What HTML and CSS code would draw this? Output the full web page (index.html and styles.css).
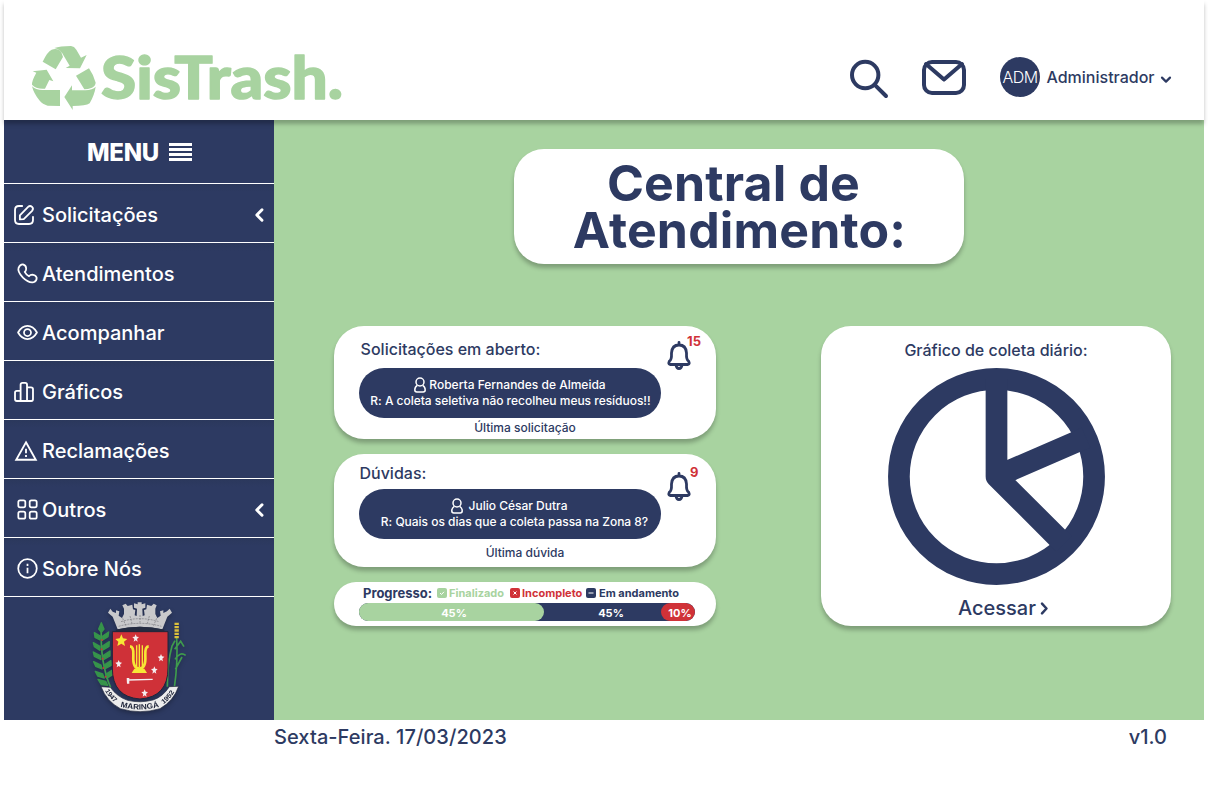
FILE: index.html
```html
<!DOCTYPE html>
<html lang="pt-BR">
<head>
<meta charset="utf-8">
<title>SisTrash</title>
<link rel="stylesheet" href="styles.css">
</head>
<body>
<div class="app">
  <header class="topbar">
    <div class="logo">
      <svg class="logo-mark" width="66" height="66" viewBox="35 27 198 198">
        <path d="M70 77Q84 47 97 41Q117 35 126 49L131 63L109 100Z"/>
        <path d="M105 36Q122 30 155 30Q165 31 171 41L185 65L202 57L182 97L139 96L151 89L134 61Q125 40 105 36Z"/>
        <path d="M170 119L209 97Q224 119 229 140Q228 150 218 155Q205 160 195 160Z"/>
        <path d="M135 183L158 148V163H198Q220 162 229 152Q226 175 211 202Q200 210 160 210V222Z"/>
        <path d="M38 151Q48 162 70 162H122V210L85 209Q70 206 60 193Q43 172 38 151Z"/>
        <path d="M40 106L82 101L102 136L90 132L77 158Q50 160 38 146Q37 135 51 110Z"/>
      </svg>
      <svg class="logo-name" width="246" height="60" viewBox="0 0 246 60">
        <text x="1" y="47.500" textLength="242" lengthAdjust="spacingAndGlyphs">SisTrash.</text>
      </svg>
    </div>
    <div class="tools">
      <svg class="search" width="40" height="40" viewBox="0 0 40 40"><circle cx="16.2" cy="16" r="13.2"/><path d="M25.8 25.8L37 37"/></svg>
      <svg class="mail" width="44" height="35" viewBox="0 0 44 35"><rect x="2" y="2" width="40" height="31" rx="8"/><path d="M4 4L22 19.5L40 4"/></svg>
      <div class="avatar">ADM</div>
      <div class="user">Administrador</div>
      <svg class="caret" width="12" height="8" viewBox="0 0 12 8"><path d="M2 1.6L6 5.6L10 1.6"/></svg>
    </div>
  </header>

  <div class="body">
    <nav class="sidebar">
      <div class="menu-head"><span>MENU</span><i class="burger"></i></div>
      <a class="item"><svg class="ico" viewBox="0 0 24 24"><path d="M10 2.200H6.500Q2.200 2.200 2.200 6.500V17.500Q2.200 21.800 6.500 21.800H17.500Q21.800 21.800 21.800 17.500V14"/><path d="M7.500 16.800V12.300L16.500 3.200Q18.600 1.200 20.800 3.200Q22.800 5.300 20.800 7.500L11.700 16.500Z"/></svg><span>Solicitações</span><svg class="back" viewBox="0 0 10 14"><path d="M8 1.800L2.800 7L8 12.200"/></svg></a>
      <a class="item in"><svg class="ico" viewBox="0 0 24 24"><path d="M1.800 5.500Q3.500 1.300 6.800 1.500Q10.500 2.500 10.500 6.500Q10.500 9 8.800 10.200Q10.500 13.500 13.700 15.200Q15.200 13.300 17.500 13.300Q21.500 13.800 22.500 16.800Q22.700 20.500 19 22Q13.500 23.300 6.800 16.800Q.3 10 1.800 5.500Z"/></svg><span>Atendimentos</span></a>
      <a class="item in"><svg class="ico" viewBox="0 0 24 24"><path d="M1.200 12Q5.500 4.500 12 4.500T22.800 12Q18.500 19.500 12 19.500T1.200 12Z"/><circle cx="12" cy="12" r="4"/></svg><span>Acompanhar</span></a>
      <a class="item"><svg class="ico" viewBox="0 0 24 24"><path d="M8.300 21.800H4.200Q2.200 21.800 2.200 20V12.600Q2.200 10.800 4.200 10.800H8.300M8.300 21.800V4Q8.300 2 10.300 2H13.300Q15.300 2 15.300 4V21.800ZM15.300 7H19.600Q21.800 7 21.800 9V20Q21.800 21.800 20 21.800H15.300"/></svg><span>Gráficos</span></a>
      <a class="item tri"><svg class="ico" viewBox="0 0 24 24"><path d="M12 2.500L22.700 21.500H1.300Z" stroke-linejoin="miter"/><path d="M12 9.500V14.500M12 16.300V18.500" stroke-linecap="butt"/></svg><span>Reclamações</span></a>
      <a class="item in"><svg class="ico" viewBox="0 0 24 24"><rect x="1.500" y="1.500" width="8" height="8" rx="2"/><rect x="14.500" y="1.500" width="8" height="8" rx="2"/><rect x="1.500" y="14.500" width="8" height="8" rx="2"/><rect x="14.500" y="14.500" width="8" height="8" rx="2"/></svg><span>Outros</span><svg class="back" viewBox="0 0 10 14"><path d="M8 1.800L2.800 7L8 12.200"/></svg></a>
      <a class="item in"><svg class="ico" viewBox="0 0 24 24"><circle cx="12" cy="12" r="10.600"/><path d="M12 11V17.500M12 6.500V9" stroke-linecap="butt"/></svg><span>Sobre Nós</span></a>
      <svg class="crest" width="120" height="123" viewBox="0 3 360 369">
        <g fill="none" stroke="#3f9b4d" stroke-width="5"><path d="M64 98Q60 200 92 275"/><path d="M283 275Q294 200 290 125M262 272Q262 200 276 150L285 134M284 160L302 136L312 152M285 190Q300 165 317 178M265 200L262 185M286 220L306 183"/></g>
        <g fill="#36944a" stroke="#36944a" stroke-width="4" stroke-linejoin="round">
          <path d="M64 80L72 99L64 109L56 99ZM43 110L62 121L60 132L45 124ZM86 108L67 121L66 133L84 122ZM40 140L60 151L60 163L43 152ZM88 137L67 150L67 163L87 151ZM40 168L61 179L63 191L43 181ZM90 165L69 179L69 192L90 180ZM41 197L63 207L66 219L47 211ZM93 194L72 207L74 219L94 208ZM46 226L68 234L73 246L53 240ZM97 222L77 235L80 247L98 236ZM54 250L77 256L83 268L64 266Z"/>
        </g>
        <g fill="#c5393a"><circle cx="66" cy="132" r="3"/><circle cx="65" cy="160" r="3"/><circle cx="68" cy="188" r="3"/><circle cx="70" cy="216" r="3"/><circle cx="77" cy="242" r="3"/></g>
        <path d="M290 80V128" stroke="#d9bf3c" stroke-width="13" stroke-dasharray="7 3" fill="none"/>
        <path d="M84 50L91 38L98 47L108 51V43L118 46L116 59L126 66L132 54V38L127 28L137 23L143 30L157 26L159 40L166 42L164 58L170 60L171 38L162 35V22L173 25V19H185V25L196 22V35L187 38L188 60L194 58L192 42L199 40L201 26L214 30L221 23L230 28L226 38V54L232 66L242 59L240 46L250 43V51L261 46L269 38L276 50L262 62L247 100Q180 84 113 100L98 62Z" fill="#c9c9cb"/>
        <path d="M123 77Q180 59 237 77M116 91Q180 73 244 91M128 67L138 90M150 60L156 83M208 60L202 83M230 67L220 90M180 57V80" fill="none" stroke="#77777d" stroke-width="2" stroke-dasharray="6 3"/>
        <path d="M106 101Q180 83 254 101L250 110Q180 101 111 109Z" fill="#242b40"/>
        <path d="M97 107H264V216Q264 303 180 309Q97 303 97 216Z" fill="#cf3138" stroke="#20263b" stroke-width="3"/>
        <path d="M124 115L129 127L142 129L132 137L135 150L124 143L112 150L115 137L106 129L119 127Z" fill="#f7e735"/>
        <g fill="#f5eef0"><path id="star" d="M167 115L170 122L177 123L171 129L173 137L167 133L161 137L163 129L157 123L164 122Z"/><use href="#star" x="76" y="59"/><use href="#star" x="-51" y="77"/><use href="#star" x="56" y="96"/><use href="#star" x="27" y="165"/></g>
        <g fill="none" stroke="#f7e735" stroke-width="5"><path d="M150 151Q162 152 160 180Q158 217 178 218Q198 217 196 180Q194 152 206 151" stroke-width="8"/><path d="M170 148V211M178 145V214M187 148V211" stroke-width="4"/></g><path d="M163 218H193L201 231H155Z" fill="#f7e735"/>
        <path d="M144 252L218 250" stroke="#f5eef0" stroke-width="4"/><path d="M140 246H148V263H141Z" fill="#f5eef0"/>
        <path d="M63 272L91 274Q112 303 143 313Q180 322 219 312Q248 303 268 272L296 271Q281 315 240 338Q180 356 121 338Q80 316 63 272Z" fill="#ededed" stroke="#20263b" stroke-width="2"/>
        <path id="left" d="M75 284Q90 312 118 329" fill="none"/><path id="mid" d="M121 332Q180 349 242 331" fill="none"/><path id="right" d="M250 325Q276 306 287 280" fill="none"/>
        <g class="crest-text"><text><textPath href="#left" textLength="46" lengthAdjust="spacingAndGlyphs">1947</textPath></text><text class="crest-city"><textPath href="#mid" textLength="118" lengthAdjust="spacingAndGlyphs">MARINGÁ</textPath></text><text><textPath href="#right" textLength="50" lengthAdjust="spacingAndGlyphs">1952</textPath></text></g>
      </svg>
    </nav>

    <main class="content">
      <h1 class="title"><span class="line first">Central de</span><span class="line">Atendimento:</span></h1>
      <div class="row">
        <div class="stack">
          <section class="card ticket">
            <div class="label">Solicitações em aberto:</div>
            <div class="pill"><div class="who"><svg class="person" viewBox="0 0 12 16"><circle cx="6" cy="5" r="4"/><path d="M3.300 8.300Q.7 10 .8 13Q.8 14.900 2.800 14.900H9.200Q11.200 14.900 11.200 13Q11.300 10 8.700 8.300"/></svg><span>Roberta Fernandes de Almeida</span></div><div class="message">R: A coleta seletiva não recolheu meus resíduos!!</div></div>
            <div class="caption">Última solicitação</div>
            <svg class="bell" viewBox="0 0 24 30"><path d="M12 1.500V4M12 4Q5 4 4.500 12Q4.800 19 2.300 20.300Q1 23 3 23.500H21Q23 23 21.700 20.300Q19.200 19 19.500 12Q19 4 12 4ZM9 24Q9.500 27.500 12 27.500T15 24"/></svg>
            <b class="count">15</b>
          </section>
          <section class="card ticket second">
            <div class="label">Dúvidas:</div>
            <div class="pill"><div class="who"><svg class="person" viewBox="0 0 12 16"><circle cx="6" cy="5" r="4"/><path d="M3.300 8.300Q.7 10 .8 13Q.8 14.900 2.800 14.900H9.200Q11.200 14.900 11.200 13Q11.300 10 8.700 8.300"/></svg><span>Julio César Dutra</span></div><div class="message">R: Quais os dias que a coleta passa na Zona 8?</div></div>
            <div class="caption">Última dúvida</div>
            <svg class="bell" viewBox="0 0 24 30"><path d="M12 1.500V4M12 4Q5 4 4.500 12Q4.800 19 2.300 20.300Q1 23 3 23.500H21Q23 23 21.700 20.300Q19.200 19 19.500 12Q19 4 12 4ZM9 24Q9.500 27.500 12 27.500T15 24"/></svg>
            <b class="count">9</b>
          </section>
          <section class="card progress">
            <div class="legend">
              <b class="heading">Progresso:</b>
              <span class="key green"><svg viewBox="0 0 10 10"><rect width="10" height="10" rx="2"/><path d="M3 5L4.500 6.500L7 3.800"/></svg><span>Finalizado</span></span>
              <span class="key red"><svg viewBox="0 0 10 10"><rect width="10" height="10" rx="2"/><path d="M3.500 3.500L6.500 6.500M6.500 3.500L3.500 6.500"/></svg><span>Incompleto</span></span>
              <span class="key navy"><svg viewBox="0 0 10 10"><rect width="10" height="10" rx="2"/><path d="M2.500 5H7.500"/></svg><span>Em andamento</span></span>
            </div>
            <div class="bar"><div class="done">45%</div><div class="doing">45%</div><div class="fail">10%</div></div>
          </section>
        </div>
        <section class="card chart">
          <div class="chart-title">Gráfico de coleta diário:</div>
          <svg class="pie" width="217" height="217" viewBox="0 0 217 217"><circle cx="108.500" cy="108.500" r="97.600"/><path d="M108.500 11V108.500L176 176M108.500 108.500L198 69.600"/></svg>
          <div class="open"><span>Acessar</span><svg width="9" height="13" viewBox="0 0 9 13"><path d="M2 1.700L6.500 6.500L2 11.300"/></svg></div>
        </section>
      </div>
    </main>
  </div>
  <footer class="footer"><span class="date">Sexta-Feira. 17/03/2023</span><span class="version">v1.0</span></footer>
</div>
</body>
</html>
```
FILE: styles.css
```css
* { box-sizing: border-box; }
body { margin: 0; background: #fff; color: #2d3a62; font-family: Inter, "Liberation Sans", sans-serif; font-weight: 500; white-space: nowrap; }
svg { display: block; flex: none; overflow: visible; }
.app { width: 1200px; height: 800px; margin: 0 4px; }

.topbar { height: 120px; position: relative; z-index: 1; background: #fff; display: flex; justify-content: space-between; box-shadow: 0 4px 4px rgba(0,0,0,.25); }
.logo { display: flex; padding: 45px 0 0 28px; }
.logo-mark { fill: #a8d3a0; margin-left: -1px; }
.logo-name { margin: 6px 0 0 3px; }
.logo-name text { font: 900 59px Lato, sans-serif; fill: #a8d3a0; stroke: #a8d3a0; stroke-width: 1.400px; stroke-linejoin: round; }
.tools { display: flex; align-items: center; height: 40px; margin: 57px 32px 0 0; }
.search, .mail, .caret { fill: none; stroke: #2d3a62; stroke-width: 4; stroke-linecap: round; stroke-linejoin: round; }
.search { margin: 4px 33px 0 0; }
.mail { margin-right: 34px; }
.avatar { width: 40px; height: 40px; border-radius: 50%; background: #2d3a62; color: #fff; font-size: 16px; font-weight: 350; letter-spacing: -.5px; line-height: 40px; text-align: center; }
.user { font-size: 16px; margin: 0 6px 0 6.500px; width: 107.500px; }
.caret { stroke-width: 2.2; margin-top: 5px; }

.body { display: flex; height: 600px; }
.sidebar { width: 270px; background: #2d3a62; color: #fff; overflow: hidden; }
.menu-head { height: 64px; border-bottom: 1px solid #fff; display: flex; align-items: center; padding: 2px 0 0 83px; gap: 10px; font-size: 24px; font-weight: 800; letter-spacing: -.3px; }
.burger { width: 23px; height: 18px; margin-top: -1px; background: repeating-linear-gradient(#fff 0 2.600px, transparent 2.600px 5.130px); }
.item { height: 59px; border-bottom: 1px solid #fff; display: flex; align-items: center; padding: 3px 10px 0 9px; font-size: 20px; background: linear-gradient(#2b385c, #2d3a62 8px); }
.ico { width: 22px; height: 22px; margin-right: 7px; fill: none; stroke: #fff; stroke-width: 2; stroke-linecap: round; stroke-linejoin: round; }
.item.in .ico { width: 21px; height: 21px; margin: 0 4.500px 0 3.500px; }
.item.tri .ico { margin: 0 5px 0 2px; }
.back { width: 10px; height: 14px; margin-left: auto; fill: none; stroke: #fff; stroke-width: 3; stroke-linecap: round; stroke-linejoin: round; }
.crest { margin-left: 76px; filter: drop-shadow(0 2px 2px rgba(0,0,0,.25)); }
.crest-text { font: 700 20px "Liberation Sans", sans-serif; fill: #20263b; }
.crest-city { font-size: 23px; }

.content { flex: 1; background: #a8d3a0; padding: 29px 33px 0 60px; }
.title { width: 450px; height: 115px; margin: 0 0 0 180px; padding: 11px 0 0 1px; border-radius: 30px; background: #fff; box-shadow: 0 4px 4px rgba(0,0,0,.25); font-size: 50px; font-weight: 700; letter-spacing: .15px; line-height: 47px; text-align: center; }
.line { display: block; }
.first { padding-right: 12px; }
.row { display: flex; justify-content: space-between; margin-top: 62px; }
.stack { display: flex; flex-direction: column; gap: 15px; }
.card { background: #fff; border-radius: 30px; box-shadow: 0 4px 4px rgba(0,0,0,.25); position: relative; }
.ticket { width: 382px; height: 113px; padding-left: 25px; }
.label { font-size: 16px; line-height: 20px; padding: 13px 0 0 1.600px; height: 42px; }
.pill { width: 302px; height: 50px; border-radius: 25px; background: #2d3a62; color: #fff; font-size: 12px; line-height: 16px; padding-top: 9px; display: flex; flex-direction: column; align-items: center; }
.who { display: flex; gap: 3px; }
.message { margin-left: 1px; letter-spacing: -.02px; }
.person { width: 12px; height: 16px; fill: none; stroke: #fff; stroke-width: 1.500; }
.caption { width: 332px; font-size: 12px; line-height: 20px; text-align: center; }
.bell { position: absolute; left: 333px; top: 15px; width: 24px; height: 30px; fill: none; stroke: #2d3a62; stroke-width: 2.800; stroke-linecap: round; stroke-linejoin: round; }
.count { position: absolute; left: 353px; top: 7.400px; font-size: 13px; line-height: 16px; letter-spacing: .2px; color: #d03238; }
.second .label { padding: 9px 0 0 .5px; height: 35px; }
.second .who { gap: 6px; margin-right: 2px; }
.second .message { margin-left: 9px; }
.second .caption { padding-top: 4px; }
.second .bell { top: 18px; }
.second .count { left: 356px; top: 10px; }
.progress { width: 382px; height: 44px; border-radius: 22px; padding: 1px 21px 0 25px; }
.legend { display: flex; align-items: center; height: 20px; padding-left: 4px; font-size: 11px; font-weight: 700; }
.heading { font-size: 13px; width: 74px; font-weight: 700; letter-spacing: -.01px; }
.key { display: flex; align-items: center; gap: 2px; }
.key svg { width: 10px; height: 10px; fill: currentColor; }
.key path { stroke: #fff; stroke-width: 1; fill: none; }
.green { color: #a8d3a0; width: 73px; }
.red { color: #d03238; width: 76px; }
.navy { color: #2d3a62; gap: 3px; }
.bar { display: flex; height: 18px; width: 336px; border-radius: 9px; overflow: hidden; background: #2d3a62; color: #fff; font-size: 11px; font-weight: 700; line-height: 20px; text-align: center; }
.done { width: 185px; padding-left: 5px; border-radius: 0 9px 9px 0; background: #a8d3a0; }
.doing { width: 117px; padding-left: 17px; }
.fail { width: 34px; padding-left: 4px; border-radius: 9px; background: #d03238; }
.chart { width: 350px; height: 300px; }
.chart-title { font-size: 16px; line-height: 20px; padding-top: 14px; height: 42px; text-align: center; }
.pie { margin-left: 67px; fill: none; stroke: #2d3a62; stroke-width: 21.700; stroke-linejoin: round; }
.open { display: flex; align-items: center; gap: 4px; padding-left: 137px; height: 46px; font-size: 20px; }
.open svg { fill: none; stroke: #2d3a62; stroke-width: 2.500; stroke-linecap: round; stroke-linejoin: round; margin-top: 1px; }
.footer { display: flex; justify-content: space-between; padding: 5px 37px 0 270px; font-size: 20px; line-height: 24px; }
.date { letter-spacing: .06px; }
```
